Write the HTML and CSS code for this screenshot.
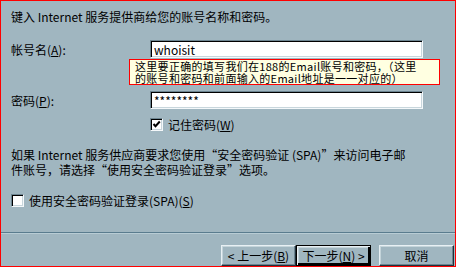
FILE: index.html
```html
<!DOCTYPE html>
<html lang="zh-CN">
<head>
  <meta charset="UTF-8">
  <title>Internet 邮件登录</title>
  <link rel="stylesheet" href="styles.css">
</head>
<body>
  <div class="wizard">
    <p class="intro">键入 Internet 服务提供商给您的账号名称和密码。</p>

    <div class="field account">
      <label for="account">帐号名(<u>A</u>):</label>
      <input type="text" id="account" class="text-input" value="whoisit">
    </div>

    <div class="tooltip">
      <div>这里要正确的填写我们在188的Email账号和密码，（这里</div>
      <div>的账号和密码和前面输入的Email地址是一一对应的）</div>
    </div>

    <div class="field password">
      <label for="password">密码(<u>P</u>):</label>
      <input type="text" id="password" class="text-input" value="********">
    </div>

    <div class="field remember">
      <span></span>
      <label class="check-label">
        <span class="checkbox">
          <svg width="9" height="9" viewBox="0 0 9 9"><polyline points="1.5,4 3.5,6.2 7.8,1.5" fill="none" stroke="#000" stroke-width="2"/></svg>
        </span>
        <span>记住密码(<u>W</u>)</span>
      </label>
    </div>

    <div class="note">
      <div>如果 Internet 服务供应商要求您使用“安全密码验证 (SPA)”来访问电子邮</div>
      <div>件账号，请选择“使用安全密码验证登录”选项。</div>
    </div>

    <label class="check-label spa">
      <span class="checkbox"></span>
      <span>使用安全密码验证登录(SPA)(<u>S</u>)</span>
    </label>

    <div class="separator"></div>

    <div class="buttons">
      <button type="button">&lt; 上一步(<u>B</u>)</button>
      <button type="button" class="default">下一步(<u>N</u>) &gt;</button>
      <button type="button" class="cancel">取消</button>
    </div>
  </div>
</body>
</html>
```

FILE: styles.css
```css
* {
  box-sizing: border-box;
}

body {
  margin: 0;
  font-family: "Noto Sans CJK SC", "DejaVu Sans", sans-serif;
  font-size: 12px;
  color: #000;
}

.wizard {
  position: relative;
  width: 456px;
  height: 267px;
  border: 1px solid #ff0000;
  background: #a0b6c0;
  padding: 0 0 0 10px;
  line-height: 15px;
}

.intro {
  margin: 0;
  padding-top: 8px;
  white-space: nowrap;
}

.field {
  display: grid;
  grid-template-columns: 139px 273px;
  align-items: center;
}

.account {
  margin-top: 16px;
}

.password {
  margin-top: 33px;
}

.remember {
  margin-top: 9px;
}

.text-input {
  height: 18px;
  padding: 0 3px;
  font: inherit;
  border: 1px solid;
  border-color: #6c8490 #f4f8fa #f4f8fa #6c8490;
  box-shadow: inset 1px 1px #000, inset -1px -1px #c8d6dc;
  background: #fff;
  outline: none;
}

.tooltip {
  position: absolute;
  left: 128px;
  top: 58px;
  width: 311px;
  height: 26px;
  padding: 0 0 0 5px;
  border: 1px solid #ff0000;
  background: #ffffe1;
  font-size: 11px;
  line-height: 12px;
  letter-spacing: 0.3px;
  white-space: nowrap;
}

.check-label {
  display: flex;
  align-items: center;
  gap: 5px;
  height: 13px;
  white-space: nowrap;
}

.checkbox {
  display: inline-flex;
  width: 13px;
  height: 13px;
  flex: none;
  background: #fff;
  border: 1px solid;
  border-color: #6c8490 #f4f8fa #f4f8fa #6c8490;
  box-shadow: inset 1px 1px #000, inset -1px -1px #c8d6dc;
  padding: 1px 0 0 1px;
}

.note {
  margin-top: 16px;
  white-space: nowrap;
}

.spa {
  margin-top: 17px;
}

.separator {
  margin: 25px 0 0 -10px;
  height: 2px;
  border-top: 1px solid #5a7c8e;
  border-bottom: 1px solid #b8ccd4;
}

.buttons {
  display: flex;
  justify-content: flex-end;
  margin-top: 11px;
  padding-right: 1px;
}

.buttons button {
  width: 75px;
  height: 21px;
  padding: 0;
  font: inherit;
  background: #a0b6c0;
  color: #000;
  border: 1px solid;
  border-color: #e8f0f4 #20303a #20303a #e8f0f4;
  box-shadow: inset -1px -1px #6c8490, inset 1px 1px #c4d4da;
}

.buttons .default {
  border: 1px solid #000;
  box-shadow: inset 1px 1px #e8f0f4, inset -2px -2px #000, inset 2px 2px #c4d4da;
}

.buttons .cancel {
  margin-left: 8px;
}
```
